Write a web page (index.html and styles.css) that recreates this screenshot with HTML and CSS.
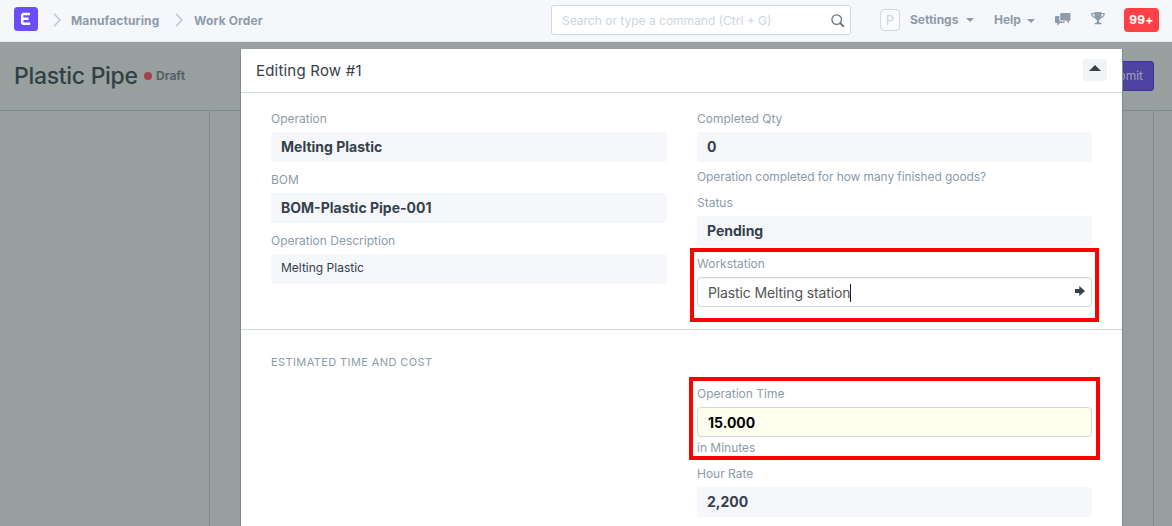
FILE: index.html
```html
<!DOCTYPE html>
<html lang="en">
<head>
<meta charset="utf-8">
<title>Plastic Pipe - Work Order</title>
<link rel="stylesheet" href="styles.css">
</head>
<body>
<header class="navbar">
  <div class="logo"><svg width="24" height="24" viewBox="0 0 24 24"><rect width="24" height="24" rx="3.5" fill="#6a4dfb"/><path d="M8.2 7H16M8.2 11.8H14.5M8.2 16.7H16.2M8.2 7V16.7" fill="none" stroke="#fff" stroke-width="2.4"/></svg></div>
  <svg class="chevron first" width="8" height="14" viewBox="0 0 8 14"><path d="M1 .7L7 7L1 13.3" fill="none" stroke="#bcc8d4" stroke-width="1.6"/></svg>
  <span class="crumb manufacturing">Manufacturing</span>
  <svg class="chevron second" width="8" height="14" viewBox="0 0 8 14"><path d="M1 .7L7 7L1 13.3" fill="none" stroke="#bcc8d4" stroke-width="1.6"/></svg>
  <span class="crumb order">Work Order</span>
  <div class="search"><span>Search or type a command (Ctrl + G)</span>
    <svg width="14" height="14" viewBox="0 0 14 14"><circle cx="5.7" cy="5.6" r="4.8" fill="none" stroke="#6c7680" stroke-width="1.3"/><path d="M9.2 9.1L12.8 12.7" stroke="#6c7680" stroke-width="2"/></svg>
  </div>
  <div class="avatar">P</div>
  <span class="menu settings">Settings</span><i class="caret"></i>
  <span class="menu help-menu">Help</span><i class="caret low"></i>
  <svg class="chat" width="16" height="13" viewBox="0 0 16 13" fill="#8d9baa"><path d="M6.4 0H14.3Q15.5 0 15.5 1.2V6.4Q15.5 7.6 14.3 7.6H14V10.2L11.3 7.6H7Q5.2 7.6 5.2 6.2V1.2Q5.2 0 6.4 0Z"/><path d="M1.2 3H4.3V6.5Q4.3 8.6 6.5 8.6H10.2Q9.7 10 8.5 10H5L2.2 12.7V10H1.2Q0 10 0 8.8V4.2Q0 3 1.2 3Z"/></svg>
  <svg class="trophy" width="14" height="13" viewBox="0 0 14 13"><path d="M3.5 0H10.5V3Q10.5 7.2 8 8.3V10.3L10.3 11V12.3H3.7V11L6 10.3V8.3Q3.5 7.2 3.5 3Z" fill="#8d9baa"/><path d="M3.7 1.6H.8Q.8 5.4 4.7 5.8M10.3 1.6H13.2Q13.2 5.4 9.3 5.8" fill="none" stroke="#8d9baa" stroke-width="1.1"/></svg>
  <div class="badge">99+</div>
</header>
<main class="page">
  <div class="page-head"><h1>Plastic Pipe</h1><i class="dot"></i><span class="draft">Draft</span><button class="submit">Submit</button></div>
  <div class="page-body"><div class="layout"></div></div>
  <section class="modal">
    <div class="modal-head"><span>Editing Row #1</span><button class="collapse"><svg width="12" height="7" viewBox="0 0 12 7"><path d="M0 6L6 0L12 6Z" fill="#36414c"/></svg></button></div>
    <div class="section top">
      <div class="column">
        <div class="field"><label>Operation</label><div class="value">Melting Plastic</div></div>
        <div class="field"><label>BOM</label><div class="value">BOM-Plastic Pipe-001</div></div>
        <div class="field"><label>Operation Description</label><div class="value plain">Melting Plastic</div></div>
      </div>
      <div class="column">
        <div class="field"><label>Completed Qty</label><div class="value">0</div><p class="note wide">Operation completed for how many finished goods?</p></div>
        <div class="field"><label>Status</label><div class="value">Pending</div></div>
        <div class="field"><label>Workstation</label><div class="value input"><span class="typed">Plastic Melting station</span><svg class="arrow" width="10" height="10" viewBox="0 0 10 10"><path d="M0 3H4.3V0L10 5L4.3 10V7H0Z" fill="#36414c"/></svg></div></div>
      </div>
    </div>
    <div class="section cost">
      <h2>Estimated Time and Cost</h2>
      <div class="column right">
        <div class="field"><label>Operation Time</label><div class="value input yellow">15.000</div><p class="note">in Minutes</p></div>
        <div class="field"><label>Hour Rate</label><div class="value">2,200</div></div>
      </div>
    </div>
    <div class="highlight one"></div>
    <div class="highlight two"></div>
  </section>
</main>
</body>
</html>
```
FILE: styles.css
```css
* { box-sizing: border-box; }
body { margin: 0; height: 526px; overflow: hidden; font-family: Inter, "Liberation Sans", sans-serif; font-size: 12px; color: #36414c; }
button { font: inherit; border: 0; padding: 0; }
.navbar { height: 42px; display: flex; align-items: center; padding: 0 13px 2px 14px; background: #f5f7fa; border-bottom: 1px solid #e3e9ec; color: #8d9baa; font-weight: 700; white-space: nowrap; }
.navbar > * { flex: none; }
.logo { width: 24px; height: 24px; margin-top: -1px; }
.logo svg { display: block; }
.chevron { margin-top: 1px; }
.first { margin-left: 15px; }
.crumb { margin-top: 2px; letter-spacing: .12px; }
.manufacturing { width: 89px; margin-left: 10px; }
.second { margin-left: 15px; }
.order { width: 72px; margin-left: 11px; }
.search { width: 300px; height: 30px; margin-left: 285px; margin-top: 1px; border: 1px solid #d1d8dd; border-radius: 3px; background: #fff; display: flex; align-items: center; justify-content: space-between; padding: 1px 5px 0 10px; color: #ced6dd; font-weight: 400; }
.search svg { margin-top: 1px; }
.avatar { width: 20px; height: 22px; margin-left: 29px; border: 1px solid #d1d8dd; border-radius: 4px; color: #d1d8dd; display: grid; place-items: center; font-weight: 500; font-size: 13px; background: #fafbfc; }
.settings { width: 51px; margin-left: 10px; }
.help-menu { width: 28px; margin-left: 20px; }
.caret { border: 4px solid transparent; border-top-color: #8d9baa; border-bottom: 0; margin-left: 5px; }
.low { margin-top: 2px; }
.chat { margin-left: 20px; margin-top: -1px; }
.trophy { margin-left: 20px; margin-top: -3px; }
.badge { width: 35px; height: 24px; margin-left: auto; border-radius: 4px; background: #ff4147; color: #fff; display: grid; place-items: center; font-weight: 700; letter-spacing: .2px; }
.page { position: relative; height: 484px; background: #979f9f; }
.page-head { height: 69px; border-bottom: 1px solid #7d8b8e; display: flex; align-items: center; padding: 0 18px 1px 14px; }
h1 { margin: 0; width: 124px; white-space: nowrap; font-size: 23px; font-weight: 500; letter-spacing: -.3px; color: #323f45; }
.dot { width: 8px; height: 8px; margin-left: 6px; border-radius: 50%; background: #a34247; }
.draft { margin-left: 4px; font-weight: 700; color: #536166; }
.submit { margin-left: auto; width: 70px; height: 30px; border: 1px solid #4230a0; border-radius: 3px; background: #4f42a0; color: #a0a0bd; text-align: right; padding-right: 10px; }
.page-body { height: 415px; padding: 0 18px 0 209px; }
.layout { height: 100%; border: solid #7d8b8e; border-width: 0 1px; }
.modal { position: absolute; left: 240px; top: 7px; width: 883px; height: 477px; background: #fff; border: solid #7d8b8e; border-width: 0 1px; overflow: hidden; }
.modal-head { height: 44px; border-bottom: 1px solid #d1d8dd; display: flex; align-items: center; justify-content: space-between; padding: 0 15px; font-size: 15px; letter-spacing: .2px; }
.collapse { width: 24px; height: 22px; margin-top: -2px; border-radius: 3px; background: #f0f4f7; display: flex; justify-content: center; align-items: center; padding-bottom: 3px; }
.section { padding: 0 30px; }
.top { height: 237px; padding-top: 16px; border-bottom: 1px solid #d1d8dd; display: grid; grid-template-columns: 396px 395px; column-gap: 30px; }
.field { margin-bottom: 8px; }
label { display: block; height: 18px; margin-bottom: 5px; line-height: 19px; color: #8d9baa; }
.value { height: 30px; padding: 0 10px; border-radius: 3px; background: #f5f7fa; font-size: 14px; line-height: 30px; font-weight: 700; }
.plain { font-size: 12px; font-weight: 400; line-height: 28px; }
.input { border: 1px solid #d1d8dd; border-radius: 4px; background: #fff; color: #555; font-weight: 400; display: flex; align-items: center; box-shadow: inset 0 1px 1px #edf0f2; padding: 2px 6px 0 10px; }
.typed { border-right: 1px solid #222; height: 18px; line-height: 17px; letter-spacing: -.12px; }
.arrow { margin-left: auto; margin-top: -5px; }
.yellow { background: #fffff0; box-shadow: none; color: #000; font-weight: 700; }
.note { height: 17px; margin: 2px 0 0; line-height: 18px; color: #8d9baa; }
.wide { margin-top: 6px; letter-spacing: -.09px; }
.cost { padding-top: 23px; }
h2 { height: 18px; margin: 0 0 13px; font-size: 11px; font-weight: 400; line-height: 18px; letter-spacing: .4px; text-transform: uppercase; color: #8d9baa; }
.right { width: 395px; margin-left: 426px; }
.highlight { position: absolute; border: 4px solid #f00; pointer-events: none; }
.one { left: 449px; top: 199px; width: 409px; height: 74px; }
.two { left: 448px; top: 328px; width: 411px; height: 83px; }
```
